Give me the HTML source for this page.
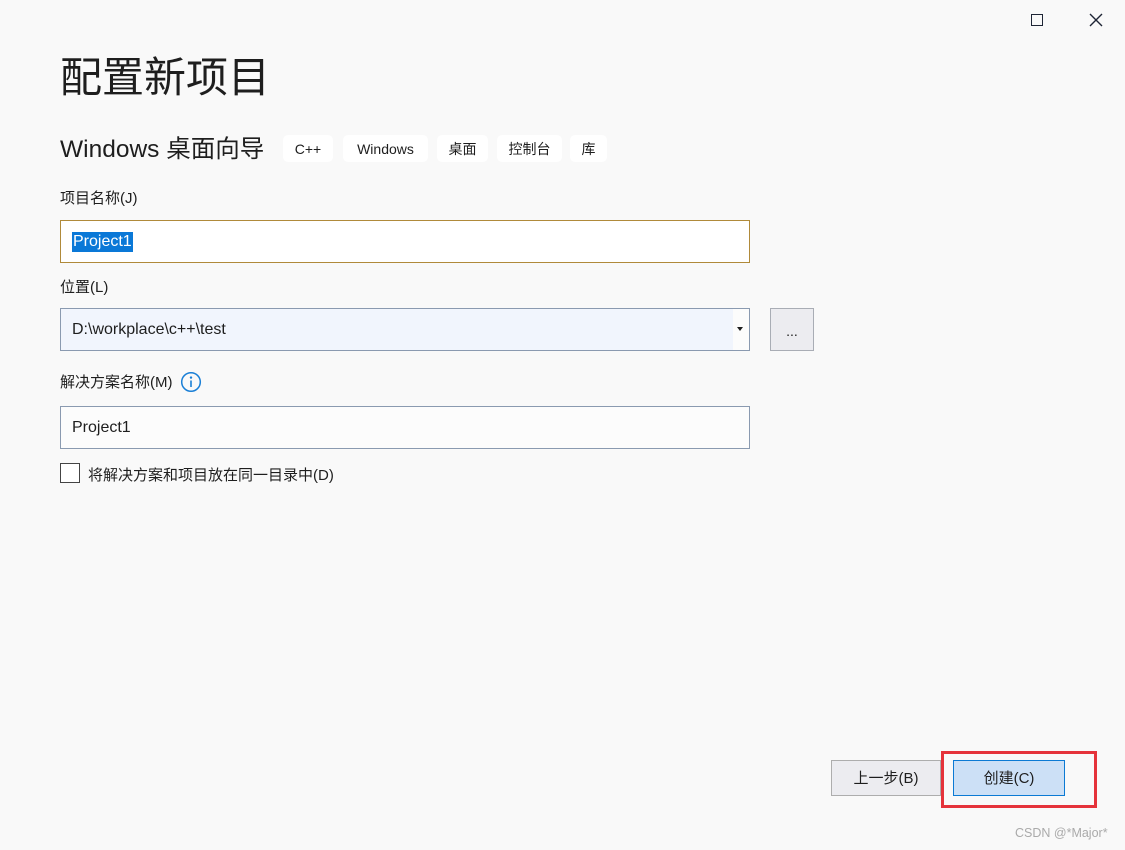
<!DOCTYPE html>
<html><head><meta charset="utf-8"><style>
*{margin:0;padding:0;box-sizing:border-box}
html,body{width:1125px;height:850px;background:#f9f9f9;overflow:hidden;position:relative;font-family:"Liberation Sans","Noto Sans CJK SC",sans-serif;color:#1e1e1e}
.a{position:absolute;white-space:nowrap}
.tag{position:absolute;top:135px;height:27px;background:#fff;border-radius:5px;font-size:14px;line-height:28px;text-align:center;color:#1e1e1e}
.lbl{font-size:15px}
.inp{position:absolute;left:60px;width:690px;height:43px;border:1px solid #8a9ab0;background:#fcfcfc;font-size:16px;line-height:42px;padding-left:11px}
.btn{position:absolute;top:760px;height:36px;font-size:15px;line-height:35px;text-align:center}
</style></head><body>
<div class="a" style="left:1031px;top:14px;width:12px;height:12px;border:1.5px solid #1e2535"></div>
<svg class="a" style="left:1089px;top:13px" width="14" height="14"><path d="M1 1L13 13M13 1L1 13" stroke="#1e2535" stroke-width="1.4"/></svg>

<div class="a" style="left:60px;top:50px;font-size:42px;line-height:56px;color:#1e1e1e">配置新项目</div>
<div class="a" style="left:60px;top:133px;font-size:24.5px;line-height:34px">Windows 桌面向导</div>
<div class="tag" style="left:283px;width:50px">C++</div>
<div class="tag" style="left:343px;width:85px">Windows</div>
<div class="tag" style="left:437px;width:51px">桌面</div>
<div class="tag" style="left:497px;width:65px">控制台</div>
<div class="tag" style="left:570px;width:37px">库</div>

<div class="a lbl" style="left:60px;top:189px;line-height:20px">项目名称(J)</div>
<div class="inp" style="top:220px;border-color:#b08a3a;background:#fff"><span style="background:#0a78d7;color:#fff;padding:0 1px;line-height:20px;display:inline-block">Project1</span></div>

<div class="a lbl" style="left:60px;top:278px;line-height:20px">位置(L)</div>
<div class="inp" style="top:308px;background:#f1f5fd">D:\workplace\c++\test</div>
<div class="a" style="left:733px;top:309px;width:16px;height:41px;background:#fcfcfc"></div>
<div class="a" style="left:737px;top:327px;width:0;height:0;border-left:3.5px solid transparent;border-right:3.5px solid transparent;border-top:4px solid #1e1e1e"></div>
<div class="a" style="left:770px;top:308px;width:44px;height:43px;border:1px solid #a9adb5;background:#ececf0;font-size:14px;line-height:45px;text-align:center">...</div>

<div class="a lbl" style="left:60px;top:373px;line-height:20px">解决方案名称(M)</div>
<svg class="a" style="left:180px;top:371px" width="22" height="22"><circle cx="11" cy="11" r="9.3" fill="none" stroke="#1a7fd6" stroke-width="1.5"/><circle cx="11" cy="6.6" r="1.2" fill="#1a7fd6"/><path d="M11 9.5V16" stroke="#1a7fd6" stroke-width="1.6"/></svg>
<div class="inp" style="top:406px">Project1</div>

<div class="a" style="left:60px;top:463px;width:20px;height:20px;border:1px solid #444;background:#fff"></div>
<div class="a lbl" style="left:88px;top:466px;line-height:20px">将解决方案和项目放在同一目录中(D)</div>

<div class="btn" style="left:831px;width:110px;border:1px solid #adadad;background:#ececf0">上一步(B)</div>
<div class="btn" style="left:953px;width:112px;border:1px solid #0b7ad4;background:#cce0f6">创建(C)</div>
<div class="a" style="left:941px;top:751px;width:156px;height:57px;border:3px solid #e5333b"></div>
<div class="a" style="left:1015px;top:826px;font-size:12.5px;color:#aaa">CSDN @*Major*</div>
</body></html>
